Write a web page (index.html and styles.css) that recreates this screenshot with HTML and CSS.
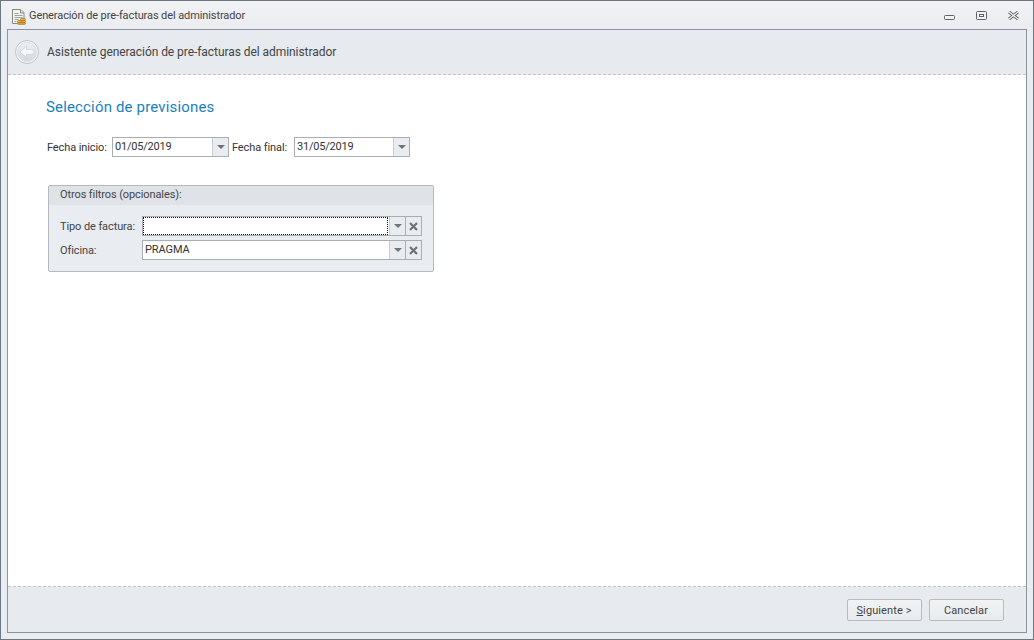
FILE: index.html
```html
<!DOCTYPE html>
<html lang="es">
<head>
<meta charset="utf-8">
<title>Generación de pre-facturas del administrador</title>
<link rel="stylesheet" href="styles.css">
</head>
<body>
<div class="window">
  <div class="titlebar">
    <svg class="app-icon" width="19" height="19" viewBox="0 0 19 19">
      <path d="M2.500 3.500h8l3.500 3v11h-11.500z" fill="#f3f4ec" stroke="#838a7f"/>
      <path d="M10.500 3.500v3.500h3.500" fill="#dfe3da" stroke="#838a7f"/>
      <path d="M4.500 7.500h4M4.500 9.500h8M4.500 11.500h8M4.500 13.500h4M4.500 15.500h2" stroke="#9aa3a8"/>
      <rect x="10.500" y="12.500" width="5" height="2" rx="1" fill="#ecbb4a" stroke="#a8761c" stroke-width=".8"/>
      <rect x="10.500" y="14.500" width="5" height="2" rx="1" fill="#e3ab3b" stroke="#a8761c" stroke-width=".8"/>
      <rect x="7.500" y="14.500" width="3.500" height="2" rx="1" fill="#ecbb4a" stroke="#a8761c" stroke-width=".8"/>
      <rect x="7.500" y="16.500" width="8" height="1.800" rx=".9" fill="#e3ab3b" stroke="#a8761c" stroke-width=".8"/>
    </svg>
    <span class="title">Generación de pre-facturas del administrador</span>
    <div class="controls">
      <svg class="ctl-min" width="11" height="5" viewBox="0 0 11 5"><rect x=".5" y=".5" width="10" height="4" rx="1" fill="#f4f5f7" stroke="#5d6268"/></svg>
      <svg width="11" height="9" viewBox="0 0 11 9"><rect x=".5" y=".5" width="10" height="8" rx="1" fill="#eef0f3" stroke="#5d6268"/><rect x="3.500" y="3.500" width="4" height="2" fill="#fff" stroke="#5d6268"/></svg>
      <svg width="11" height="9" viewBox="0 0 11 9"><path d="M1 1l9 7M10 1l-9 7" stroke="#5d6268" stroke-width="3"/><path d="M1 1l9 7M10 1l-9 7" stroke="#f4f5f7" stroke-width="1.200"/></svg>
    </div>
  </div>
  <div class="frame">
    <header class="wizard-head">
      <span class="back">
        <svg width="24" height="24" viewBox="0 0 24 24">
          <defs>
            <linearGradient id="bk" x1="0" y1="0" x2="0" y2="1"><stop offset="0" stop-color="#eef0f3"/><stop offset="1" stop-color="#d3d8df"/></linearGradient>
            <linearGradient id="ar" x1="0" y1="0" x2="0" y2="1"><stop offset="0" stop-color="#ffffff"/><stop offset="1" stop-color="#eceff2"/></linearGradient>
          </defs>
          <circle cx="12" cy="12" r="11.500" fill="#f4f5f7" stroke="#bfc4ca"/>
          <circle cx="12" cy="12" r="9.500" fill="url(#bk)" stroke="#dde1e6"/>
          <path d="M5 12l6.500-6v3.500h4.500q3 0 3 2.500t-3 2.500h-4.500v3.500z" fill="url(#ar)" stroke="#c4cad1" stroke-width=".6"/>
        </svg>
      </span>
      <span class="wizard-title">Asistente generación de pre-facturas del administrador</span>
    </header>
    <main class="content">
      <h1 class="section">Selección de previsiones</h1>
      <div class="dates">
        <label class="lbl-start">Fecha inicio:</label>
        <div class="combo date"><span class="value">01/05/2019</span><span class="drop"><i class="caret"></i></span></div>
        <label class="lbl-end">Fecha final:</label>
        <div class="combo date end"><span class="value">31/05/2019</span><span class="drop"><i class="caret"></i></span></div>
      </div>
      <section class="group">
        <div class="group-head">Otros filtros (opcionales):</div>
        <div class="group-body">
          <div class="row">
            <label class="row-label">Tipo de factura:</label>
            <div class="combo wide"><span class="value focus"></span><span class="drop"><i class="caret"></i></span><span class="clear"><svg width="9" height="9" viewBox="0 0 9 9"><path d="M1 1l7 7M8 1l-7 7" stroke="#6c737b" stroke-width="2.200"/></svg></span></div>
          </div>
          <div class="row">
            <label class="row-label">Oficina:</label>
            <div class="combo wide"><span class="value">PRAGMA</span><span class="drop"><i class="caret"></i></span><span class="clear"><svg width="9" height="9" viewBox="0 0 9 9"><path d="M1 1l7 7M8 1l-7 7" stroke="#6c737b" stroke-width="2.200"/></svg></span></div>
          </div>
        </div>
      </section>
    </main>
    <footer class="wizard-foot">
      <button class="btn" type="button"><u>S</u>iguiente &gt;</button>
      <button class="btn" type="button">Cancelar</button>
    </footer>
  </div>
</div>
</body>
</html>
```
FILE: styles.css
```css
* { box-sizing: border-box; }
html, body { margin: 0; height: 100%; }
body {
  width: 1034px;
  height: 640px;
  overflow: hidden;
  font-family: Roboto, "Open Sans", sans-serif;
  font-size: 11px;
  letter-spacing: -.1px;
  color: #3b3b3b;
}
.window {
  width: 1034px;
  height: 640px;
  display: flex;
  flex-direction: column;
  border: 1px solid #6d7781;
  padding: 0 6px 6px;
  background: linear-gradient(#f1f2f4 0, #e9ecf0 30px);
}
.titlebar {
  height: 28px;
  flex: none;
  display: flex;
  align-items: center;
  padding: 1px 0 0 3px;
}
.app-icon { flex: none; }
.title { font-size: 11px; color: #444; }
.controls {
  margin-left: auto;
  display: flex;
  align-items: center;
  gap: 21px;
  padding-right: 8px;
}
.ctl-min { margin-top: 4px; }
.frame {
  flex: 1;
  display: flex;
  flex-direction: column;
  border: 1px solid #8c9399;
  min-height: 0;
}
.wizard-head {
  height: 45px;
  flex: none;
  display: flex;
  align-items: center;
  padding: 0 0 1px 7px;
  background: #e7eaee;
  border-bottom: 1px dashed #c2c6ca;
}
.back { display: flex; }
.wizard-title { margin-left: 8px; font-size: 12px; letter-spacing: -.06px; color: #444; }
.content {
  flex: 1;
  background: #fff;
  padding: 22px 0 0 38px;
  min-height: 0;
}
.section {
  margin: 0;
  font-size: 15px;
  font-weight: 400;
  line-height: 20px;
  letter-spacing: .16px;
  color: #1a7fbe;
}
.dates {
  display: flex;
  align-items: center;
  margin-top: 20px;
  padding-left: 1px;
  color: #333;
}
.lbl-start { width: 65px; }
.lbl-end { width: 65px; padding-left: 3px; }
.combo {
  display: flex;
  height: 20px;
  border: 1px solid #a9aeb3;
  background: #fff;
  color: #333;
}
.combo.date { width: 117px; }
.combo.date.end { width: 116px; }
.combo.date .value { padding-left: 2px; letter-spacing: -.2px; }
.combo.wide { flex: 1; }
.value {
  flex: 1;
  display: block;
  line-height: 18px;
  padding-left: 2px;
  min-width: 0;
}
.value.focus { border: 1px dotted #111; margin: 0 1px 0 0; }
.drop, .clear {
  flex: none;
  display: flex;
  align-items: center;
  justify-content: center;
  background: #e9ecf0;
  border-left: 1px solid #c9cdd2;
}
.drop { width: 16px; }
.clear { width: 16px; border-left-color: #a9aeb3; }
.caret {
  display: block;
  width: 0;
  height: 0;
  border: 4px solid transparent;
  border-top-color: #6c737b;
  border-bottom-width: 0;
}
.group {
  width: 386px;
  margin: 28px 0 0 2px;
  border: 1px solid #b4b9be;
  border-radius: 2px;
  background: #e9ecf0;
}
.group-head {
  height: 19px;
  line-height: 18px;
  padding-left: 11px;
  background: #dfe3e7;
  color: #444;
}
.group-body {
  padding: 11px;
  display: flex;
  flex-direction: column;
  gap: 4px;
}
.row { display: flex; align-items: center; height: 20px; }
.row-label { width: 82px; flex: none; color: #444; }
.wizard-foot {
  height: 46px;
  flex: none;
  display: flex;
  justify-content: flex-end;
  align-items: center;
  gap: 7px;
  padding: 0 22px 0 0;
  background: #e7eaee;
  border-top: 1px dashed #c2c6ca;
}
.btn {
  width: 75px;
  height: 22px;
  padding: 1px 1px 0 0;
  font: inherit;
  letter-spacing: .1px;
  color: #444;
  background: linear-gradient(#f1f3f5, #e8ebee);
  border: 1px solid #b7bcc1;
  border-radius: 2px;
}
```
